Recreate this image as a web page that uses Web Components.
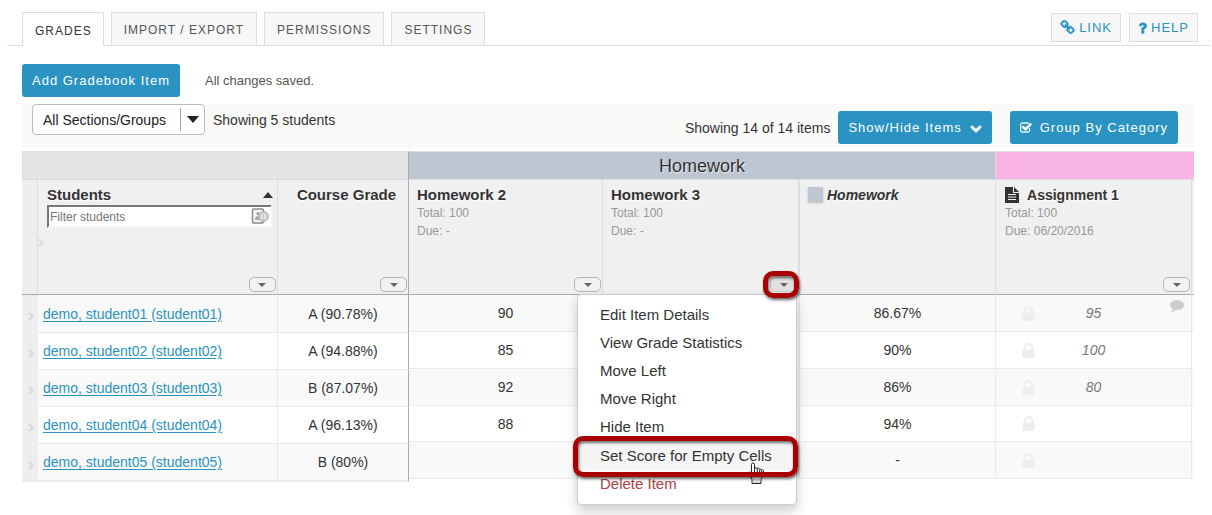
<!DOCTYPE html>
<html lang="en">
<head>
<meta charset="utf-8">
<title>Gradebook</title>
<style>
body { margin: 0; background: #fff; color: #333; font: 14px/18px "Liberation Sans", Arial, sans-serif; }
</style>
</head>
<body>
<gradebook-page></gradebook-page>

<script>
const define = (name, html, setup) => {
  const template = document.createElement('template');
  template.innerHTML = html;
  customElements.define(name, class extends HTMLElement {
    constructor() {
      super();
      this.attachShadow({ mode: 'open' }).append(template.content.cloneNode(true));
    }
    connectedCallback() { if (setup) setup(this, this.shadowRoot); }
  });
};

const fa = (d, weight = 0, box = '0 0 1792 1792') => [box, `<path stroke="currentColor" stroke-width="${weight}" d="${d}"/>`];
const icons = {
  chain: fa('M1520 1216q0-40-28-68l-208-208q-28-28-68-28-42 0-72 32 3 3 19 18.5t21.5 21.5 15 19 13 25.5 3.5 27.5q0 40-28 68t-68 28q-15 0-27.5-3.5t-25.5-13-19-15-21.5-21.5-18.5-19q-33 31-33 73 0 40 28 68l206 207q27 27 68 27 40 0 68-26l147-146q28-28 28-67zm-703-705q0-40-28-68l-206-207q-28-28-68-28-39 0-68 27l-147 146q-28 28-28 67 0 40 28 68l208 208q27 27 68 27 42 0 72-31-3-3-19-18.5t-21.5-21.5-15-19-13-25.5-3.5-27.5q0-40 28-68t68-28q15 0 27.5 3.5t25.5 13 19 15 21.5 21.5 18.5 19q33-31 33-73zm895 705q0 120-85 203l-147 146q-83 83-203 83-121 0-204-85l-206-207q-83-83-83-203 0-123 88-209l-88-88q-86 88-208 88-120 0-204-84l-208-208q-84-84-84-204t85-203l147-146q83-83 203-83 121 0 204 85l206 207q83 83 83 203 0 123-88 209l88 88q86-88 208-88 120 0 204 84l208 208q84 84 84 204z', 60),
  question: fa('M1088 1256v240q0 16-12 28t-28 12h-240q-16 0-28-12t-12-28v-240q0-16 12-28t28-12h240q16 0 28 12t12 28zm316-600q0 54-15.5 101t-35 76.5-55 59.5-57.5 43.5-61 35.5q-41 23-68.5 65t-27.5 67q0 17-12 32.5t-28 15.5h-240q-15 0-25.5-18.5t-10.5-37.5v-45q0-83 65-156.5t143-108.5q59-27 84-56t25-76q0-42-46.5-74t-107.5-32q-65 0-108 29-35 25-107 115-13 16-31 16-12 0-25-8l-164-125q-13-10-15.5-25t5.5-28q160-266 464-266 80 0 161 31t146 83 106 127.5 41 158.5z', 50, '360 230 1070 1330'),
  chevronDown: fa('M1683 808l-742 741q-19 19-45 19t-45-19l-742-741q-19-19-19-45.5t19-45.5l166-165q19-19 45-19t45 19l531 531 531-531q19-19 45-19t45 19l166 165q19 19 19 45.5t-19 45.5z', 90),
  checkSquare: fa('M1472 930v318q0 119-84.5 203.5t-203.5 84.5h-832q-119 0-203.5-84.5t-84.5-203.5v-832q0-119 84.5-203.5t203.5-84.5h832q63 0 117 25 15 7 18 23 3 17-9 29l-49 49q-10 10-23 10-3 0-9-2-23-6-45-6h-832q-66 0-113 47t-47 113v832q0 66 47 113t113 47h832q66 0 113-47t47-113v-254q0-13 9-22l64-64q10-10 23-10 6 0 12 3 20 8 20 29zm231-489l-814 814q-24 24-57 24t-57-24l-430-430q-24-24-24-57t24-57l110-110q24-24 57-24t57 24l263 263 647-647q24-24 57-24t57 24l110 110q24 24 24 57t-24 57z', 50, '36 100 1720 1460'),
  lock: fa('M320 768h512v-192q0-106-75-181t-181-75-181 75-75 181v192zm832 96v576q0 40-28 68t-68 28h-960q-40 0-68-28t-28-68v-576q0-40 28-68t68-28h32v-192q0-184 132-316t316-132 316 132 132 316v192h32q40 0 68 28t28 68z', 0, '0 128 1152 1408'),
  comment: fa('M1792 896q0 174-120 321.5t-326 233-450 85.5q-70 0-145-8-198 175-460 242-49 14-114 22-17 2-30.5-9t-17.5-29v-1q-3-4-.5-12t2-10 4.5-9.5l6-9 7-8.5 8-9q7-8 31-34.5t34.5-38 31-39.5 32.5-51 27-59 26-76q-157-89-247.5-220t-90.5-281q0-130 71-248.5t191-204.5 286-136.5 348-50.5q244 0 450 85.5t326 233 120 321.5z', 0, '0 256 1792 1540'),
  file: ['0 0 14 16', '<path fill-rule="evenodd" d="M0 0H8V6H14V16H0ZM3 7V8H11V7ZM3 9.500V10.500H11V9.500ZM3 12V13H11V12Z"/><path d="M9 0 14 5H9Z"/>'],
  caret: ['0 0 8 4', '<path d="M0 0H8L4 4Z"/>'],
  bigCaret: ['0 0 12 7', '<path d="M0 0H12L6 7Z"/>'],
  sort: ['0 0 10 6', '<path d="M0 6H10L5 0Z"/>'],
  chevronRight: ['0 0 6 9', '<path d="M1 1 4.500 4.500 1 8" fill="none" stroke="currentColor" stroke-width="2"/>'],
  keycard: ['0 0 18 16', '<rect x="1.500" y="1" width="11" height="14" rx="1.500" fill="#f4f4f4" stroke="#8a8a8a" stroke-width="1.500"/><circle cx="7" cy="5.500" r="1.500" fill="#999"/><path d="M4 12q0-4 3-4t3 4z" fill="#aaa"/><circle cx="12.500" cy="8.500" r="5" fill="#c4c8cc" stroke="#b4b8bc"/><path d="M11 5.500v6M14 5.500v6" stroke="#fff" fill="none"/>'],
  hand: ['0 0 16 22', '<path d="M5 1Q3.500 1 3.500 2.500V12L2.500 10.500Q1.500 9.500.700 10.500T1 12.500L4 17.500V21.500H13V17.500Q15.500 14 15.500 11V8.500Q15 7.500 13.500 8 13 6.500 11.500 7.200 11 5.500 9 6.200 8 5.500 6.500 6V2.500Q6.500 1 5 1Z" fill="#fff" stroke="#222"/><path d="M6.500 6V10M9.200 6.500V10.500M11.700 7.500V11M13.700 8.500V11" stroke="#222" fill="none"/><path d="M5 17H12V21H5Z" fill="#ddd"/>']
};

define('gb-icon', `
<style>:host { display: inline-block; flex: none; width: 12px; height: 12px; } svg { display: block; width: 100%; height: 100%; }</style>
<svg aria-hidden="true" fill="currentColor"></svg>`, (host, root) => {
  const [box, art] = icons[host.getAttribute('name')];
  const svg = root.querySelector('svg');
  svg.setAttribute('viewBox', box);
  svg.innerHTML = art;
});

define('gb-tab', `
<style>
:host { display: block; }
a { display: block; box-sizing: border-box; height: 33px; padding: 0 12px; border: 1px solid #ddd; border-bottom: 0; background: #f7f7f7; color: #555; font-size: 12px; line-height: 34px; letter-spacing: 1px; text-decoration: none; }
:host([active]) a { height: 34px; padding: 0 11px 0 12px; background: #fff; color: #333; line-height: 36px; }
</style>
<a href="#"><slot></slot></a>`);

define('gb-tool-link', `
<style>
:host { display: block; }
a { display: flex; align-items: center; gap: 4px; box-sizing: border-box; height: 29px; padding: 0 8px; border: 1px solid #ddd; background: #f7f7f7; color: #2a93c1; font-size: 13px; letter-spacing: 1px; text-decoration: none; }
</style>
<a href="#"><slot></slot></a>`);

define('gb-button', `
<style>
:host { display: block; }
button { display: flex; align-items: center; gap: 8px; height: 33px; padding: 0 10px; border: 0; border-radius: 3px; background: #2a93c1; color: #fff; font: inherit; font-size: 13px; letter-spacing: 1px; white-space: nowrap; }
</style>
<button type="button"><slot></slot></button>`);

define('gb-header', `
<style>
:host { display: block; margin: 0 2px 0 7px; padding-top: 12px; }
nav { display: flex; align-items: flex-start; gap: 7px; }
header { display: flex; justify-content: space-between; align-items: flex-start; height: 33px; padding: 0 12px 0 15px; border-bottom: 1px solid #ddd; }
.tools { gap: 8px; padding-top: 1px; }
gb-icon { width: 15px; height: 15px; }
.help { width: 9px; height: 12px; }
</style>
<header>
  <nav aria-label="Sections">
    <gb-tab active>GRADES</gb-tab><gb-tab>IMPORT / EXPORT</gb-tab><gb-tab>PERMISSIONS</gb-tab><gb-tab>SETTINGS</gb-tab>
  </nav>
  <nav class="tools" aria-label="Tools">
    <gb-tool-link><gb-icon name="chain"></gb-icon>LINK</gb-tool-link>
    <gb-tool-link><gb-icon name="question" class="help"></gb-icon>HELP</gb-tool-link>
  </nav>
</header>`);

define('gb-group-select', `
<style>
:host { display: block; position: relative; }
select { display: block; appearance: none; box-sizing: border-box; width: 173px; height: 31px; padding: 0 30px 0 10px; border: 1px solid #bbb; border-radius: 4px; background: #fff; color: #222; font: inherit; }
span { position: absolute; top: 4px; right: 0; bottom: 4px; width: 24px; border-left: 1px solid #aaa; display: grid; place-items: center; color: #222; pointer-events: none; }
gb-icon { width: 12px; height: 7px; }
</style>
<select aria-label="Sections or groups"><option>All Sections/Groups</option></select>
<span><gb-icon name="bigCaret"></gb-icon></span>`);

define('gb-toolbar', `
<style>
:host { display: block; }
.actions { display: flex; align-items: center; gap: 25px; padding: 18px 0 7px; font-size: 13px; color: #555; }
.band { display: flex; justify-content: space-between; align-items: flex-start; height: 44px; padding: 0 16px 0 10px; background: #fafaf9; }
.filter, .items { display: flex; align-items: center; gap: 8px; }
.items { padding-top: 7px; gap: 18px; }
.check { width: 12px; height: 11px; }
</style>
<div class="actions"><gb-button>Add Gradebook Item</gb-button><span role="status">All changes saved.</span></div>
<div class="band">
  <div class="filter"><gb-group-select></gb-group-select><span>Showing 5 students</span></div>
  <div class="items">
    <div class="filter"><span>Showing 14 of 14 items</span><gb-button>Show/Hide Items<gb-icon name="chevronDown"></gb-icon></gb-button></div>
    <gb-button><gb-icon name="checkSquare" class="check"></gb-icon>Group By Category</gb-button>
  </div>
</div>`);

define('gb-menu-button', `
<style>
:host { display: block; width: 27px; height: 15px; }
button { display: grid; place-items: center; width: 100%; height: 100%; padding: 0; border: 1px solid #b5b5b5; border-radius: 5px; background: #f2f2f2; color: #666; }
:host([open]) button { border-color: #ccc; background: #e0e0e0; }
gb-icon { width: 8px; height: 4px; }
</style>
<button type="button" aria-label="Open menu"><gb-icon name="caret"></gb-icon></button>`);

define('gb-callout', `
<style>:host { display: block; box-sizing: border-box; border: 5px solid #a80000; border-radius: 10px; box-shadow: 1px 2px 3px rgba(0,0,0,.6), inset 1px 2px 3px rgba(0,0,0,.55); pointer-events: none; }</style>`);

define('gb-item-menu', `
<style>
:host { display: block; box-sizing: border-box; width: 220px; padding: 6px 0; border: 1px solid #ccc; border-radius: 4px; background: #fff; box-shadow: 0 6px 12px rgba(0,0,0,.2); }
ul { margin: 0; padding: 0; list-style: none; }
li { position: relative; }
button { display: block; width: 100%; height: 28px; padding: 0 0 0 22px; border: 0; background: none; color: #333; font: inherit; font-size: 15px; font-weight: 400; text-align: left; }
.current { z-index: 1; }
.current button { height: 29px; background: #f5f5f5; }
.delete button { color: #a94442; }
gb-icon { position: absolute; top: 21px; left: 170px; width: 16px; height: 22px; }
gb-callout { position: absolute; inset: -5px -2px -7px -5px; }
</style>
<ul>
  <li><button type="button">Edit Item Details</button></li>
  <li><button type="button">View Grade Statistics</button></li>
  <li><button type="button">Move Left</button></li>
  <li><button type="button">Move Right</button></li>
  <li><button type="button">Hide Item</button></li>
  <li class="current"><button type="button">Set Score for Empty Cells</button><gb-icon name="hand"></gb-icon><gb-callout></gb-callout></li>
  <li class="delete"><button type="button">Delete Item</button></li>
</ul>`);

define('gb-column-head', `
<style>
:host { display: flex; flex-direction: column; box-sizing: border-box; height: 114px; padding: 5px 1px 2px 8px; font-weight: 400; text-align: left; color: #999; font-size: 12px; line-height: 18px; }
.title { display: flex; align-items: center; gap: 4px; height: 19px; color: #333; font-size: 15px; font-weight: 700; white-space: nowrap; text-shadow: 0 1px 0 #fff; }
:host([marked]) .title { font-size: 14px; }
:host([centered]) .title { justify-content: center; }
.menu { margin-top: auto; align-self: flex-end; position: relative; }
</style>
<div class="title"><slot name="mark"></slot><slot name="title"></slot></div>
<slot></slot>
<div class="menu"><slot name="menu"></slot></div>`);

const tableStyles = `
:host { display: block; }
table { width: 100%; border-collapse: separate; border-spacing: 0; table-layout: fixed; }
th, td { box-sizing: border-box; padding: 0; font-weight: 400; }
.group th { height: 29px; border-top: 1px solid #ddd; border-bottom: 1px solid #ddd; background: #e4e4e4; }
.heads th { height: 115px; border-bottom: 1px solid #aaa; border-right: 1px solid #ddd; background: #f0f0f0; vertical-align: top; }
td, tbody th { height: 37px; border-right: 1px solid #eaeaea; border-bottom: 1px solid #eaeaea; text-align: center; vertical-align: middle; }
tbody tr:nth-child(odd) { background: #f9f9f9; }
`;

define('gb-student-table', `
<style>${tableStyles}
:host { width: 387px; flex: none; }
.group th, tr > :last-child { border-right: 1px solid #aaa; }
.group th { border-left: 1px solid #ddd; }
.heads th:first-child { background: #eee; }
tbody tr:first-child > * { height: 38px; }
tbody tr:last-child > * { height: 38px; border-bottom-width: 2px; }
tbody td:first-child { border: 0; background: #eee; color: #d5d5d5; }
td:first-child gb-icon { display: block; width: 6px; height: 9px; margin: 4px 0 0 6px; }
tbody th { padding-left: 5px; text-align: left; }
a { color: #2a93c1; text-decoration: underline; text-underline-offset: 2px; }
gb-column-head.students { padding-left: 9px; }
.sort { width: 10px; height: 6px; }
.spread { display: flex; justify-content: space-between; align-items: center; width: 226px; }
label { display: flex; position: relative; margin: 1px 4px 0 0; }
input { box-sizing: border-box; width: 100%; height: 23px; padding: 0 24px 0 1px; border: 2px solid #777; border-right-color: #f6f6f6; border-bottom-color: #f6f6f6; border-radius: 0; background: #fff; font: inherit; font-size: 12px; }
input::placeholder { color: #757575; }
label gb-icon { position: absolute; top: 3px; right: 3px; width: 18px; height: 16px; }
.fold { display: block; width: 6px; height: 9px; margin: 10px 0 0 -9px; color: #ddd; }
</style>
<table>
  <colgroup><col style="width:16px"><col><col style="width:131px"></colgroup>
  <thead>
    <tr class="group"><th colspan="3"></th></tr>
    <tr class="heads">
      <th></th>
      <th scope="col"><gb-column-head class="students">
        <span slot="title" class="spread">Students<gb-icon name="sort" class="sort"></gb-icon></span>
        <label><input type="text" placeholder="Filter students" aria-label="Filter students"><gb-icon name="keycard"></gb-icon></label>
        <gb-icon name="chevronRight" class="fold"></gb-icon>
        <gb-menu-button slot="menu"></gb-menu-button>
      </gb-column-head></th>
      <th scope="col"><gb-column-head centered><span slot="title">Course Grade</span><gb-menu-button slot="menu"></gb-menu-button></gb-column-head></th>
    </tr>
  </thead>
  <tbody></tbody>
</table>`, (host, root) => {
  const grades = ['A (90.78%)', 'A (94.88%)', 'B (87.07%)', 'A (96.13%)', 'B (80%)'];
  root.querySelector('tbody').innerHTML = grades.map((grade, i) => `
    <tr><td><gb-icon name="chevronRight"></gb-icon></td>
    <th scope="row"><a href="#">demo, student0${i + 1} (student0${i + 1})</a></th><td>${grade}</td></tr>`).join('');
});

define('gb-item-table', `
<style>${tableStyles}
:host { flex: 1; min-width: 785px; }
.group .homework { border-right: 1px solid #ddd; background: #bec5d3; font-size: 18px; line-height: 26px; text-shadow: 1px 1px 1px #eee; }
.group .assignments { background: #f8b5e6; }
tr:not(.group) > :nth-child(2) { border-right-width: 2px; }
tr:not(.group) > :nth-child(5) { border-right: 0; }
tbody tr:nth-child(4) td { height: 36px; }
tbody tr:nth-child(4) .cell { height: 35px; }
.swatch { width: 15px; height: 15px; background: #bec5d3; box-shadow: 0 1px 2px #bbb; }
.file { width: 14px; height: 16px; margin-right: 4px; }
.external { padding-left: 9px; }
.cell { display: grid; grid-template-columns: 64px 1fr 64px; align-items: center; height: 36px; color: #777; font-style: italic; }
.cell > gb-icon { width: 13px; height: 15px; justify-self: center; color: #eee; }
.cell > .note { width: 14px; height: 12px; align-self: start; justify-self: end; margin: 5px 7px 0 0; color: #ccc; }
gb-item-menu { position: absolute; top: 17px; right: 0; z-index: 2; }
gb-callout { position: absolute; inset: -6px -2px -6px -7px; z-index: 3; }
</style>
<table>
  <colgroup><col style="width:194px"><col style="width:197px"><col style="width:196px"><col style="width:196px"><col></colgroup>
  <thead>
    <tr class="group"><th colspan="3" scope="colgroup" class="homework">Homework</th><th colspan="2" class="assignments"></th></tr>
    <tr class="heads">
      <th scope="col"><gb-column-head><span slot="title">Homework 2</span><div>Total: 100</div><div>Due: -</div><gb-menu-button slot="menu"></gb-menu-button></gb-column-head></th>
      <th scope="col"><gb-column-head><span slot="title">Homework 3</span><div>Total: 100</div><div>Due: -</div><gb-menu-button slot="menu" open></gb-menu-button><gb-item-menu slot="menu"></gb-item-menu><gb-callout slot="menu"></gb-callout></gb-column-head></th>
      <th scope="col"><gb-column-head marked><span slot="mark" class="swatch"></span><i slot="title">Homework</i></gb-column-head></th>
      <th scope="col"><gb-column-head marked class="external"><gb-icon slot="mark" name="file" class="file"></gb-icon><span slot="title">Assignment 1</span><div>Total: 100</div><div>Due: 06/20/2016</div><gb-menu-button slot="menu"></gb-menu-button></gb-column-head></th>
      <th></th>
    </tr>
  </thead>
  <tbody></tbody>
</table>`, (host, root) => {
  const rows = [['90', '86.67%', '95', true], ['85', '90%', '100'], ['92', '86%', '80'], ['88', '94%', ''], ['', '-', '']];
  root.querySelector('tbody').innerHTML = rows.map(([score, average, assignment, note]) => `
    <tr><td>${score}</td><td></td><td>${average}</td>
    <td><div class="cell"><gb-icon name="lock"></gb-icon><span>${assignment}</span>${note ? '<gb-icon name="comment" class="note"></gb-icon>' : ''}</div></td><td></td></tr>`).join('');
});

define('gradebook-page', `
<style>
:host { display: block; box-sizing: border-box; min-height: 100vh; }
main { padding: 0 18px 33px 22px; }
.grid { display: flex; align-items: flex-start; margin-top: 3px; }
</style>
<gb-header></gb-header>
<main>
  <gb-toolbar></gb-toolbar>
  <div class="grid"><gb-student-table></gb-student-table><gb-item-table></gb-item-table></div>
</main>`);
</script>
</body>
</html>
